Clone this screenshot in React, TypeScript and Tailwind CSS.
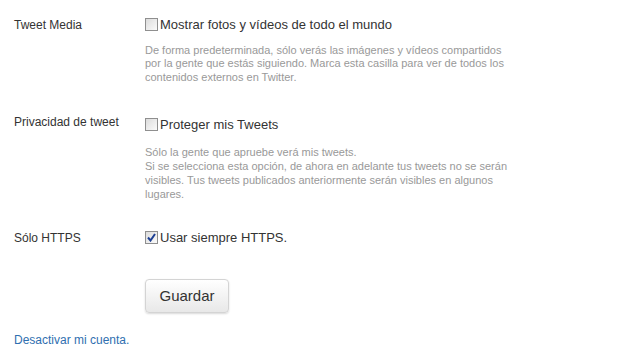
import React from 'react';

const Box = ({ checked = false }: { checked?: boolean }) => (
  <span className="inline-flex h-[13px] w-[13px] shrink-0 items-center justify-center border border-[#8f8f8f] bg-gradient-to-br from-[#dcdcdc] to-[#fbfbfb]">
    {checked && (
      <svg width="9" height="9" viewBox="0 0 9 9">
        <path d="M1 4.5 L3.5 7.5 L8 1" fill="none" stroke="#1c3f94" strokeWidth="2" />
      </svg>
    )}
  </span>
);

const Row = ({
  label,
  option,
  checked,
  children,
  className = '',
  optClass = '',
  descClass = 'mt-[9px] leading-[13.5px]',
}: {
  label: string;
  option: string;
  checked?: boolean;
  children?: React.ReactNode;
  className?: string;
  optClass?: string;
  descClass?: string;
}) => (
  <div className={`flex ${className}`}>
    <div className="w-[131px] shrink-0 pt-[1px] text-[12px] text-[#333]">{label}</div>
    <div className={optClass}>
      <label className="flex items-center gap-[2px] text-[13px] text-[#333]">
        <Box checked={checked} />
        <span>{option}</span>
      </label>
      {children && <p className={`text-[11px] text-[#999] ${descClass}`}>{children}</p>}
    </div>
  </div>
);

export default function App() {
  return (
    <div className="h-[361px] w-[620px] bg-white pl-[14px] pt-[15px]" style={{ fontFamily: '"Liberation Sans", Arial, sans-serif' }}>
      {/* Tweet media */}
      <Row label="Tweet Media" option="Mostrar fotos y vídeos de todo el mundo">
        De forma predeterminada, sólo verás las imágenes y vídeos compartidos
        <br />
        por la gente que estás siguiendo. Marca esta casilla para ver de todos los
        <br />
        contenidos externos en Twitter.
      </Row>

      {/* Privacy */}
      <Row
        className="mt-[28px]"
        optClass="pt-[3px]"
        descClass="mt-[10px] leading-[14px]"
        label="Privacidad de tweet"
        option="Proteger mis Tweets"
      >
        Sólo la gente que apruebe verá mis tweets.
        <br />
        Si se selecciona esta opción, de ahora en adelante tus tweets no se serán
        <br />
        visibles. Tus tweets publicados anteriormente serán visibles en algunos
        <br />
        lugares.
      </Row>

      <Row className="mt-[27px]" label="Sólo HTTPS" option="Usar siempre HTTPS." checked />

      <div className="ml-[131px] mt-[32px]">
        <button className="h-[34px] w-[84px] rounded-[4px] border border-[#d4d4d4] bg-gradient-to-b from-white to-[#e8e8e8] text-[15px] text-[#333] shadow-[0_1px_2px_rgba(0,0,0,0.15)]">
          Guardar
        </button>
      </div>

      <a href="#" className="mt-[18px] block text-[12px] text-[#2f6fb0]">
        Desactivar mi cuenta.
      </a>
    </div>
  );
}
